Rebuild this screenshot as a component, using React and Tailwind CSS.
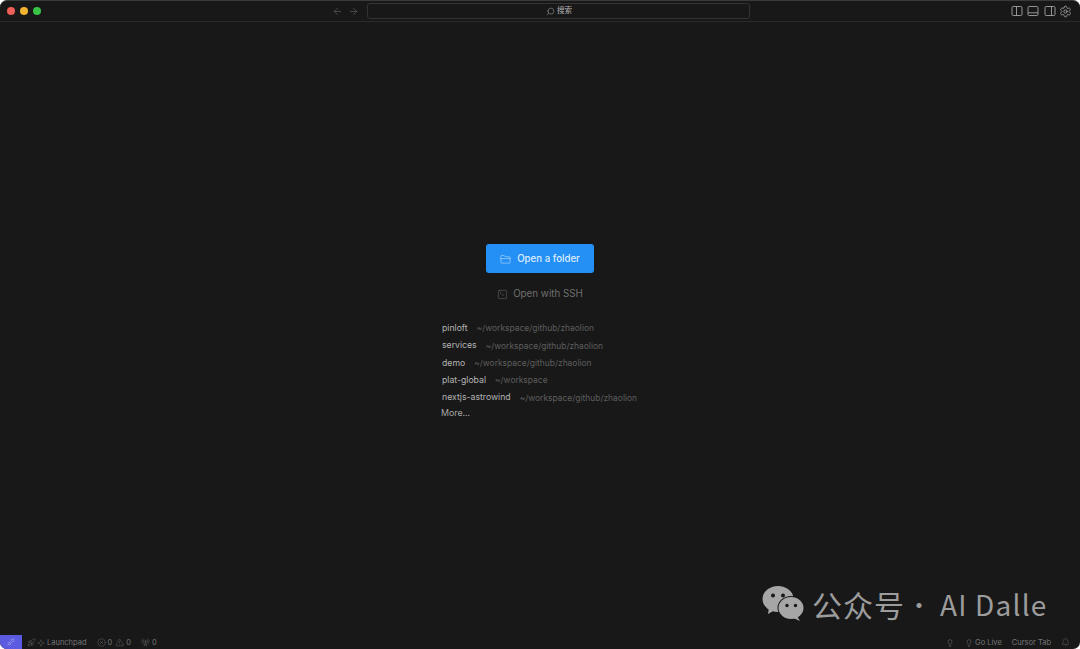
import React from 'react';
import {
  ArrowLeft,
  ArrowRight,
  Search,
  Settings,
  FolderClosed,
  SquareTerminal,
  Rocket,
  CircleX,
  TriangleAlert,
  RadioTower,
  Bell,
  Lightbulb,
  Unplug,
  Sparkle,
} from 'lucide-react';

const recents = [
  { name: 'pinloft', path: '~/workspace/github/zhaolion' },
  { name: 'services', path: '~/workspace/github/zhaolion' },
  { name: 'demo', path: '~/workspace/github/zhaolion' },
  { name: 'plat-global', path: '~/workspace' },
  { name: 'nextjs-astrowind', path: '~/workspace/github/zhaolion' },
];

const LayoutIcon = ({ kind }) => (
  <svg width="12" height="12" viewBox="0 0 12 12" fill="none" stroke="#a3a3a3" strokeWidth="0.9">
    <rect x="1" y="1.5" width="10" height="9" rx="1.2" />
    {kind === 'left' && <path d="M5.5 1.5v9" />}
    {kind === 'bottom' && <path d="M1 7.8h10" />}
    {kind === 'right' && <path d="M7.5 1.5v9" />}
  </svg>
);

const WechatLogo = () => (
  <svg width="42" height="36" viewBox="0 0 42 36">
    <ellipse cx="16" cy="13" rx="15.5" ry="13" fill="#a6a6a6" />
    <path d="M7 21l-1 7 7-4z" fill="#a6a6a6" />
    <circle cx="11" cy="9.5" r="2" fill="#181818" />
    <circle cx="21" cy="9.5" r="2" fill="#181818" />
    <ellipse cx="29" cy="22" rx="13.5" ry="12" fill="#181818" />
    <ellipse cx="29" cy="22" rx="12.5" ry="11" fill="#a6a6a6" />
    <path d="M35 30l3 5-7-3z" fill="#a6a6a6" />
    <circle cx="25" cy="19.5" r="1.7" fill="#181818" />
    <circle cx="33.5" cy="19.5" r="1.7" fill="#181818" />
  </svg>
);

export default function App() {
  return (
    <div className="relative w-[1080px] h-[649px] overflow-hidden bg-white font-['Inter','Noto_Sans_CJK_SC',sans-serif]">
      <div className="flex flex-col h-full rounded-[7px] overflow-hidden bg-[#181818] border-t border-[#3a3a3a]">
        {/* title bar */}
        <div className="flex items-center h-[21px] shrink-0 border-b border-[#2a2a2a] pl-[7px] pr-[8px]">
          <div className="flex items-center gap-[5px] w-[325px]">
            <span className="w-[8px] h-[8px] rounded-full bg-[#ed5f57]" />
            <span className="w-[8px] h-[8px] rounded-full bg-[#f2b32f]" />
            <span className="w-[8px] h-[8px] rounded-full bg-[#39c345]" />
          </div>
          <div className="flex items-center gap-[5px] w-[35px] text-[#6e6e6e]">
            <ArrowLeft size={11} strokeWidth={1.2} />
            <ArrowRight size={11} strokeWidth={1.2} />
          </div>
          <div className="flex items-center justify-center gap-[2px] pl-[1px] w-[383px] h-[16px] rounded-[3px] border border-[#333333] text-[#b5b5b5] text-[7.5px]">
            <Search size={9} strokeWidth={1.3} className="-scale-x-100" />
            <span>搜索</span>
          </div>
          <div className="flex items-center gap-[4.4px] ml-auto">
            <LayoutIcon kind="left" />
            <LayoutIcon kind="bottom" />
            <LayoutIcon kind="right" />
            <Settings size={13} strokeWidth={1.3} className="text-[#bdbdbd] -ml-[1px]" />
          </div>
        </div>

        {/* welcome */}
        <div className="flex-1 pt-[222px]">
          <div className="flex flex-col items-center">
            <button className="flex items-center justify-center gap-[6px] w-[108px] h-[29px] pt-[1px] rounded-[3px] bg-[#2490f5] text-[#dcecfd] text-[9.7px] font-medium">
              <FolderClosed size={11} strokeWidth={1.1} />
              <span>Open a folder</span>
            </button>
            <div className="flex items-center gap-[5px] mt-[14px] h-[14px] text-[#6f6f6f] text-[9.8px]">
              <SquareTerminal size={11} strokeWidth={1.1} />
              <span>Open with SSH</span>
            </div>
          </div>
          <div className="flex flex-col mt-[19px] pl-[442px]">
            {recents.map((item) => (
              <div key={item.name} className="flex items-center gap-[9px] h-[17.3px]">
                <span className="text-[8.7px] text-[#b4b4b4]">{item.name}</span>
                <span className="text-[8.45px] text-[#5d5d5d]">{item.path}</span>
              </div>
            ))}
            <div className="-ml-[1px] h-[14px] leading-[13px] text-[8.8px] text-[#a6a6a6]">More...</div>
          </div>
        </div>

        {/* status bar */}
        <div className="flex items-center h-[14px] shrink-0 pt-[1px] text-[7.5px] text-[#757575]">
          <div className="flex items-center justify-center w-[22px] -mt-[1px] h-[14px] bg-[#5a5be0] text-[#c9c9f5]">
            <Unplug size={8} strokeWidth={1.2} />
          </div>
          <div className="flex items-center gap-[1px] ml-[5px]">
            <Rocket size={9} strokeWidth={1.1} />
            <Sparkle size={8} strokeWidth={1.1} />
            <span className="ml-[1px]">Launchpad</span>
          </div>
          <div className="flex items-center gap-[2px] ml-[10px]">
            <CircleX size={9} strokeWidth={1.1} />
            <span>0</span>
            <TriangleAlert size={9} strokeWidth={1.1} className="ml-[1px]" />
            <span>0</span>
          </div>
          <div className="flex items-center gap-[2px] ml-[10px]">
            <RadioTower size={9} strokeWidth={1.1} />
            <span>0</span>
          </div>
          <div className="flex items-center ml-auto pr-[10px]">
            <Lightbulb size={8} strokeWidth={1.3} className="text-[#8a8a8a]" />
            <div className="flex items-center gap-[2px] ml-[11px]">
              <Lightbulb size={8} strokeWidth={1.3} className="text-[#8a8a8a]" />
              <span>Go Live</span>
            </div>
            <span className="ml-[10px]">Cursor Tab</span>
            <Bell size={9} strokeWidth={1.1} className="ml-[10px]" />
          </div>
        </div>
      </div>

      {/* watermark */}
      <div className="absolute left-[762px] top-[586px] flex items-center text-[#9c9c9c] font-['Noto_Sans_CJK_SC','Noto_Sans',sans-serif] leading-[36px] whitespace-nowrap">
        <WechatLogo />
        <span className="ml-[8px] text-[30px] tracking-[1px]">公众号</span>
        <span className="ml-[2px] text-[24px]">·</span>
        <span className="ml-[9px] text-[28px] tracking-[1.2px]">AI Dalle</span>
      </div>
    </div>
  );
}
